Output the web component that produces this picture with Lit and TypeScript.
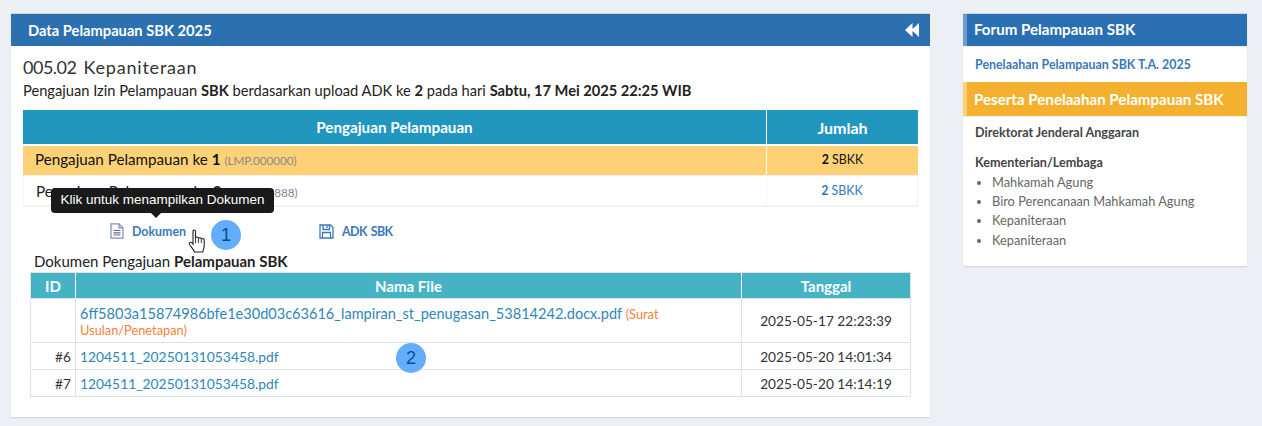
import { LitElement, html, css } from "lit";
import { customElement } from "lit/decorators.js";

@customElement("app-root")
export class AppRoot extends LitElement {
  static styles = css`
    :host { display: block; width: 1262px; height: 426px; background: #ecf0f5; overflow: hidden; font-family: "Lato", "Noto Sans", sans-serif; color: #333; font-size: 14px; }
    * { box-sizing: border-box; }
    .page { display: grid; grid-template-columns: 919px 284px; column-gap: 33px; padding: 13px 0 0 11px; align-items: start; }
    .main { position: relative; height: 404px; background: #fff; box-shadow: 0 1px 1px rgba(0,0,0,.1); border-top: 1px solid #d2d6de; }
    .head { height: 32px; background: #2c70b0; color: #fff; display: flex; align-items: center; justify-content: space-between; padding: 0 11px 0 17px; font-weight: 700; font-size: 14.7px; }
    .head svg { display: block; }
    .body { padding: 9px 12px 0; }
    h3 { margin: 0; font-weight: 400; font-size: 18px; line-height: 24px; color: #333; letter-spacing: .8px; }
    h3 span { margin-right: 7px; letter-spacing: -.5px; }
    .lead { margin: 2px 0 0; line-height: 20px; font-size: 14.66px; color: #222; }
    table { border-collapse: collapse; width: 100%; }
    .t1 { margin-top: 9px; width: 895px; border-collapse: separate; border-spacing: 0; }
    .t1 th { background: #2196bf; color: #fff; height: 36px; font-size: 15.2px; font-weight: 700; text-align: center; padding: 0; border-bottom: 2px solid #fff; }
    .t1 td { padding: 0 12px; font-size: 15.2px; color: #222; }
    .t1 .sep { border-left: 1px solid #f4f4f4; }
    .t1 th.sep, .t1 .on .sep { border-left: 1px solid #fff; }
    .t1 .num { width: 152px; text-align: center; font-size: 12.4px; }
    .t1 th.jml { font-size: 16px; }
    .t1 .on td { background: #fed177; height: 29px; color: #111; padding-bottom: 3px; }
    .t1 .off td { height: 32px; border-top: 1px solid #f4f4f4; border-bottom: 2px solid #f2f2f2; }
    .t1 .off td:first-child { border-left: 1px solid #f4f4f4; }
    .t1 .off .num { color: #337ab7; border-right: 1px solid #f4f4f4; }
    small { font-size: 11.7px; color: #888; }
    .bar { display: flex; height: 44px; align-items: center; padding: 4px 0 0 87px; color: #3a78b9; font-size: 12.4px; font-weight: 700; }
    .bar a { display: flex; align-items: center; gap: 8px; }
    .bar a + a { margin-left: 133px; letter-spacing: -.6px; word-spacing: 1.5px; }
    .bar svg { display: block; }
    .cap { margin-left: 11px; line-height: 20px; font-size: 15px; color: #222; }
    .t2 { margin: 1px 0 0 7px; width: 881px; }
    .t2 th, .t2 td { border: 1px solid #dde1e8; font-size: 13.7px; }
    .t2 th { background: #45b3c4; color: #fff; height: 26px; padding: 0; text-align: center; font-weight: 700; font-size: 15px; border-right-color: #fff; }
    .t2 th:last-child { border-right-color: #dde1e8; }
    .t2 td { padding: 0 4px; color: #333; height: 27px; }
    .t2 .id { width: 45px; text-align: right; }
    .t2 .tg { width: 169px; text-align: center; }
    .t2 a { color: #2f86b8; font-size: 13.85px; }
    .t2 a.long { font-size: 14.55px; }
    .t2 .big td { height: 44px; line-height: 16px; }
    .t2 .big .nm { padding-top: 3px; }
    .t2 em { font-style: normal; font-size: 12.8px; color: #f7803c; }
    .side { height: 253px; background: #fff; box-shadow: 0 1px 1px rgba(0,0,0,.1); border-top: 1px solid #d2d6de; }
    .sh { background: #2b6fb3; border-left: 4px solid #6c9bcf; color: #fff; font-weight: 700; font-size: 15.1px; height: 32px; line-height: 30px; padding-left: 7px; }
    .sl { height: 36px; line-height: 35px; padding-left: 12px; font-size: 12.4px; color: #3a78b9; font-weight: 700; border-top: 1px solid #f0f0f0; }
    .sh2 { background: #f4b02f; border-left-color: #fed177; height: 34px; line-height: 34px; }
    .sb { padding: 7px 12px 0; font-size: 12.6px; font-weight: 700; color: #444; border-top: 1px solid #eee; }
    .sb p { margin: 0 0 14px; line-height: 17px; }
    ul { margin: 3px 0 0; padding: 0 0 0 17px; color: #666; font-weight: 400; font-size: 12.8px; }
    li { line-height: 19.2px; }
    .tip { position: absolute; left: 40px; top: 174px; width: 223px; height: 25px; background: #1a1a1a; border-radius: 4px; color: #fff; font: 13.5px/24px "Liberation Sans", sans-serif; text-align: center; }
    .tip::after { content: ""; position: absolute; left: 100px; bottom: -5px; border: 5px solid transparent; border-bottom: 0; border-top-color: #1a1a1a; }
    .badge { position: absolute; width: 30px; height: 30px; border-radius: 50%; background: #62aefc; color: #0a4a96; font: 18px/30px "Liberation Sans", sans-serif; text-align: center; }
    .b1 { left: 200px; top: 206px; }
    .b2 { left: 385px; top: 329px; }
    .cursor { position: absolute; left: 177px; top: 215px; }
  `;

  render() {
    return html`<div class="page">
      <section class="main">
        <div class="head"><span>Data Pelampauan SBK 2025</span>
          <svg width="14" height="14" viewBox="0 0 14 14" fill="#fff"><path d="M7.500 0v14L0 7zM14 0v14L6.500 7z"/></svg>
        </div>
        <div class="body">
          <h3><span>005.02</span>Kepaniteraan</h3>
          <p class="lead">Pengajuan Izin Pelampauan <b>SBK</b> berdasarkan upload ADK ke <b>2</b> pada hari <b>Sabtu, 17 Mei 2025 22:25 WIB</b></p>
          <table class="t1">
            <tr><th>Pengajuan Pelampauan</th><th class="sep num jml">Jumlah</th></tr>
            <tr class="on"><td>Pengajuan Pelampauan ke <b>1</b> <small>(LMP.000000)</small></td><td class="sep num"><b>2</b> SBKK</td></tr>
            <tr class="off"><td>Pengajuan Pelampauan ke <b>2</b> <small>(LMP.000888)</small></td><td class="sep num"><b>2</b> SBKK</td></tr>
          </table>
          <div class="bar">
            <a><svg width="14" height="16" viewBox="0 0 14 16" fill="none" stroke="#7d8fb5" stroke-width="1.2"><path d="M1 .8h8l4 4v10.400H1zM9 .8v4h4"/><path d="M3.500 7.500h7M3.500 9.800h7M3.500 12h7" stroke="#5f6f96"/></svg>Dokumen</a>
            <a><svg width="15" height="15" viewBox="0 0 15 15" fill="none" stroke="#3a78b9" stroke-width="1.3"><path d="M1 1h10.500L14 3.500V14H1z"/><path d="M4 1v4.500h6.500V1M3.500 14V8.500h8V14"/><path d="M8 2v2" /></svg>ADK SBK</a>
          </div>
          <div class="cap">Dokumen Pengajuan <b>Pelampauan SBK</b></div>
          <table class="t2">
            <tr><th class="id" style="text-align:center">ID</th><th>Nama File</th><th class="tg">Tanggal</th></tr>
            <tr class="big"><td class="id"></td><td class="nm"><a class="long">6ff5803a15874986bfe1e30d03c63616_lampiran_st_penugasan_53814242.docx.pdf</a> <em>(Surat Usulan/Penetapan)</em></td><td class="tg">2025-05-17 22:23:39</td></tr>
            <tr><td class="id">#6</td><td><a>1204511_20250131053458.pdf</a></td><td class="tg">2025-05-20 14:01:34</td></tr>
            <tr><td class="id">#7</td><td><a>1204511_20250131053458.pdf</a></td><td class="tg">2025-05-20 14:14:19</td></tr>
          </table>
        </div>
        <div class="tip">Klik untuk menampilkan Dokumen</div>
        <div class="badge b1">1</div>
        <div class="badge b2">2</div>
        <svg class="cursor" width="18" height="24" viewBox="0 0 18 24"><path d="M5 2.200c0-1.700 2.500-1.700 2.500 0V9c0-1.300 2.900-1.300 2.900 0v.8c0-1.300 2.900-1.300 2.900 0v.8c0-1.300 2.900-1.300 2.900.2V17c0 2.500-1 4-1.500 6H6.500C5.500 20.500 3.500 18.500 1.500 15.500c-.9-1.500 1-3 2.300-1.800L5 15z" fill="#fff" stroke="#222" stroke-width="1.100"/><path d="M7.500 9v5M10.400 9.800V14M13.300 10.600V14" stroke="#222" stroke-width=".9" fill="none"/></svg>
      </section>
      <aside class="side">
        <div class="sh">Forum Pelampauan SBK</div>
        <div class="sl">Penelaahan Pelampauan SBK T.A. 2025</div>
        <div class="sh sh2">Peserta Penelaahan Pelampauan SBK</div>
        <div class="sb">
          <p>Direktorat Jenderal Anggaran</p>
          <div>Kementerian/Lembaga</div>
          <ul><li>Mahkamah Agung</li><li>Biro Perencanaan Mahkamah Agung</li><li>Kepaniteraan</li><li>Kepaniteraan</li></ul>
        </div>
      </aside>
    </div>`;
  }
}
